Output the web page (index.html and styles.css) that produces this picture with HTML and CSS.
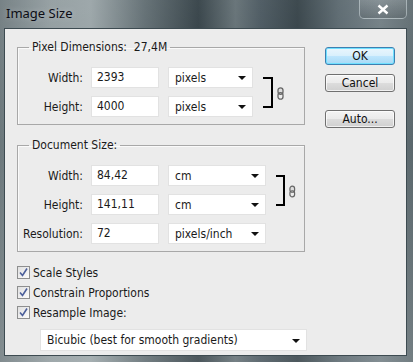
FILE: index.html
```html
<!DOCTYPE html>
<html lang="en">
<head>
<meta charset="UTF-8">
<title>Image Size</title>
<link rel="stylesheet" href="styles.css">
</head>
<body>

<div class="window">
  <!-- Title bar -->
  <div class="titlebar">
    <span class="title">Image Size</span>
    <div class="close">
      <svg width="14" height="11" viewBox="0 0 14 11"><path d="M2.5 1.5 L11.5 9.5 M11.5 1.5 L2.5 9.5" stroke="#fff" stroke-width="2.4"/></svg>
    </div>
  </div>

  <div class="client">
    <div class="main">

      <fieldset class="group">
        <legend>Pixel Dimensions:&nbsp; 27,4M</legend>
        <div class="grid grid-px">
          <label class="lbl">Width:</label>
          <div class="field">2393</div>
          <div class="select">pixels<span class="arrow"></span></div>
          <div class="link link-px">
            <div class="bracket"></div>
            <svg class="chain" width="7" height="13" viewBox="0 0 7 13"><rect x="1" y="0.8" width="5" height="6.5" rx="2.5" fill="#ddd" stroke="#666" stroke-width="1.3"/><rect x="1" y="5.7" width="5" height="6.5" rx="2.5" fill="none" stroke="#666" stroke-width="1.3"/></svg>
          </div>
          <label class="lbl">Height:</label>
          <div class="field">4000</div>
          <div class="select">pixels<span class="arrow"></span></div>
        </div>
      </fieldset>

      <fieldset class="group">
        <legend>Document Size:</legend>
        <div class="grid grid-doc">
          <label class="lbl">Width:</label>
          <div class="field">84,42</div>
          <div class="select">cm<span class="arrow"></span></div>
          <div class="link link-doc">
            <div class="bracket"></div>
            <svg class="chain" width="7" height="13" viewBox="0 0 7 13"><rect x="1" y="0.8" width="5" height="6.5" rx="2.5" fill="#ddd" stroke="#666" stroke-width="1.3"/><rect x="1" y="5.7" width="5" height="6.5" rx="2.5" fill="none" stroke="#666" stroke-width="1.3"/></svg>
          </div>
          <label class="lbl">Height:</label>
          <div class="field">141,11</div>
          <div class="select">cm<span class="arrow"></span></div>
          <label class="lbl">Resolution:</label>
          <div class="field">72</div>
          <div class="select">pixels/inch<span class="arrow"></span></div>
        </div>
      </fieldset>

      <div class="checks">
        <div class="check"><span class="box"><svg width="11" height="11" viewBox="0 0 11 11"><path d="M2 5.5 L4.5 8.5 L9 1.5" fill="none" stroke="#4b5f9a" stroke-width="1.6"/></svg></span>Scale Styles</div>
        <div class="check"><span class="box"><svg width="11" height="11" viewBox="0 0 11 11"><path d="M2 5.5 L4.5 8.5 L9 1.5" fill="none" stroke="#4b5f9a" stroke-width="1.6"/></svg></span>Constrain Proportions</div>
        <div class="check"><span class="box"><svg width="11" height="11" viewBox="0 0 11 11"><path d="M2 5.5 L4.5 8.5 L9 1.5" fill="none" stroke="#4b5f9a" stroke-width="1.6"/></svg></span>Resample Image:</div>
      </div>

      <div class="select select-wide">Bicubic (best for smooth gradients)<span class="arrow"></span></div>
    </div>

    <!-- Buttons -->
    <div class="buttons">
      <button class="btn btn-default">OK</button>
      <button class="btn">Cancel</button>
      <button class="btn btn-auto">Auto...</button>
    </div>
  </div>
</div>

</body>
</html>
```

FILE: styles.css
```css
  body {
    margin: 0;
    width: 413px;
    height: 362px;
    overflow: hidden;
    font-family: 'DejaVu Sans Condensed', 'DejaVu Sans', sans-serif;
    font-size: 12px;
    color: #1a1a1a;
  }

  /* Aero frame */
  .window {
    width: 413px;
    height: 362px;
    box-sizing: border-box;
    display: flex;
    flex-direction: column;
    background:
      linear-gradient(to bottom, rgba(255,255,255,0.08), rgba(0,0,0,0) 40%, rgba(255,255,255,0.15)),
      linear-gradient(to right, #6c787c 0%, #8e999c 12%, #96a1a4 22%, #5b686d 35%, #2d3a40 48%, #5e6b70 57%, #44525a 63%, #2e3b41 72%, #55636a 82%, #6d7a80 92%, #5a676c 100%);
  }

  .titlebar {
    height: 28px;
    display: flex;
    justify-content: space-between;
    align-items: flex-start;
    flex-shrink: 0;
  }

  .title {
    font-family: 'Noto Sans', sans-serif;
    font-size: 13px;
    color: #0c0c14;
    margin: 4px 0 0 6px;
    text-shadow: 0 0 6px rgba(255,255,255,0.35);
  }

  .close {
    width: 46px;
    height: 18px;
    margin-right: 6px;
    border: 1px solid rgba(210,220,225,0.55);
    border-top: none;
    border-radius: 0 0 5px 5px;
    background: linear-gradient(to bottom, rgba(255,255,255,0.12), rgba(0,0,0,0.08));
    display: flex;
    justify-content: center;
    align-items: center;
  }

  /* Dialog body */
  .client {
    flex: 1;
    margin: 0 6px 6px 4px;
    border: 1px solid #3d4b51;
    background-color: #ececec;
    display: flex;
    justify-content: space-between;
    padding: 11px 11px 0 12px;
  }

  .main {
    width: 288px;
    display: flex;
    flex-direction: column;
  }

  .group {
    margin: 0;
    padding: 13px 0 7px 0;
    border: 1px solid #a8a8a8;
    box-shadow: inset 1px 1px 0 #fafafa;
    min-width: 0;
  }

  .group + .group {
    margin-top: 13px;
  }

  .group legend {
    margin-left: 11px;
    padding: 0 3px;
    line-height: 14px;
  }

  .grid {
    display: grid;
    column-gap: 8px;
    row-gap: 8px;
    grid-auto-rows: 21px;
  }

  .grid-px {
    grid-template-columns: 65px 68px 86px 24px;
  }

  .grid-doc {
    grid-template-columns: 65px 68px 99px 22px;
  }

  .lbl {
    text-align: right;
    align-self: center;
  }

  .field {
    background-color: #fff;
    border: 1px solid #e2e2e2;
    padding: 0 5px;
    line-height: 19px;
  }

  .select {
    background-color: #fff;
    border: 1px solid #e2e2e2;
    padding: 1px 6px 0 6px;
    line-height: 19px;
    display: flex;
    justify-content: space-between;
    align-items: center;
    margin-left: 1px;
  }

  .arrow {
    width: 0;
    height: 0;
    border-left: 4px solid transparent;
    border-right: 4px solid transparent;
    border-top: 4px solid #111;
  }

  /* Constrain bracket + chain */
  .link {
    grid-row: 1 / span 2;
    grid-column: 4;
    display: flex;
    align-items: center;
  }

  .link-px {
    margin-left: 2px;
  }

  .link-doc {
    margin-left: 2px;
  }

  .bracket {
    width: 8px;
    height: 27px;
    border: 2px solid #000;
    border-left: none;
    margin-top: 1px;
  }

  .chain {
    margin-left: 4px;
    margin-top: 2px;
  }

  /* Checkboxes */
  .checks {
    margin-top: 14px;
    display: flex;
    flex-direction: column;
    gap: 7px;
  }

  .check {
    display: flex;
    align-items: center;
    height: 13px;
  }

  .box {
    width: 11px;
    height: 11px;
    border: 1px solid #8e8f8f;
    background: linear-gradient(to bottom right, #e0e0e0, #fcfcfc);
    margin-right: 3px;
    display: flex;
  }

  .select-wide {
    margin: 10px 0 0 23px;
    height: 19px;
    width: 253px;
  }

  /* Buttons */
  .buttons {
    width: 70px;
    display: flex;
    flex-direction: column;
    padding-top: 7px;
  }

  .btn {
    font-family: 'DejaVu Sans Condensed', 'DejaVu Sans', sans-serif;
    font-size: 12px;
    height: 18px;
    padding: 0;
    border: 1px solid #707070;
    border-radius: 3px;
    color: #111;
    background: linear-gradient(to bottom, #f4f4f4 0%, #ebebeb 48%, #dcdcdc 52%, #d0d0d0 100%);
    box-shadow: inset 0 0 0 1px rgba(255,255,255,0.7);
    margin-bottom: 9px;
  }

  .btn-default {
    border-color: #3c7fb1;
    background: linear-gradient(to bottom, #eaf6fd 0%, #d9f0fc 48%, #bee6fd 52%, #a7d9f5 100%);
    box-shadow: inset 0 0 0 1px #6fe0ff;
  }

  .btn-auto {
    margin-top: 9px;
  }
```
